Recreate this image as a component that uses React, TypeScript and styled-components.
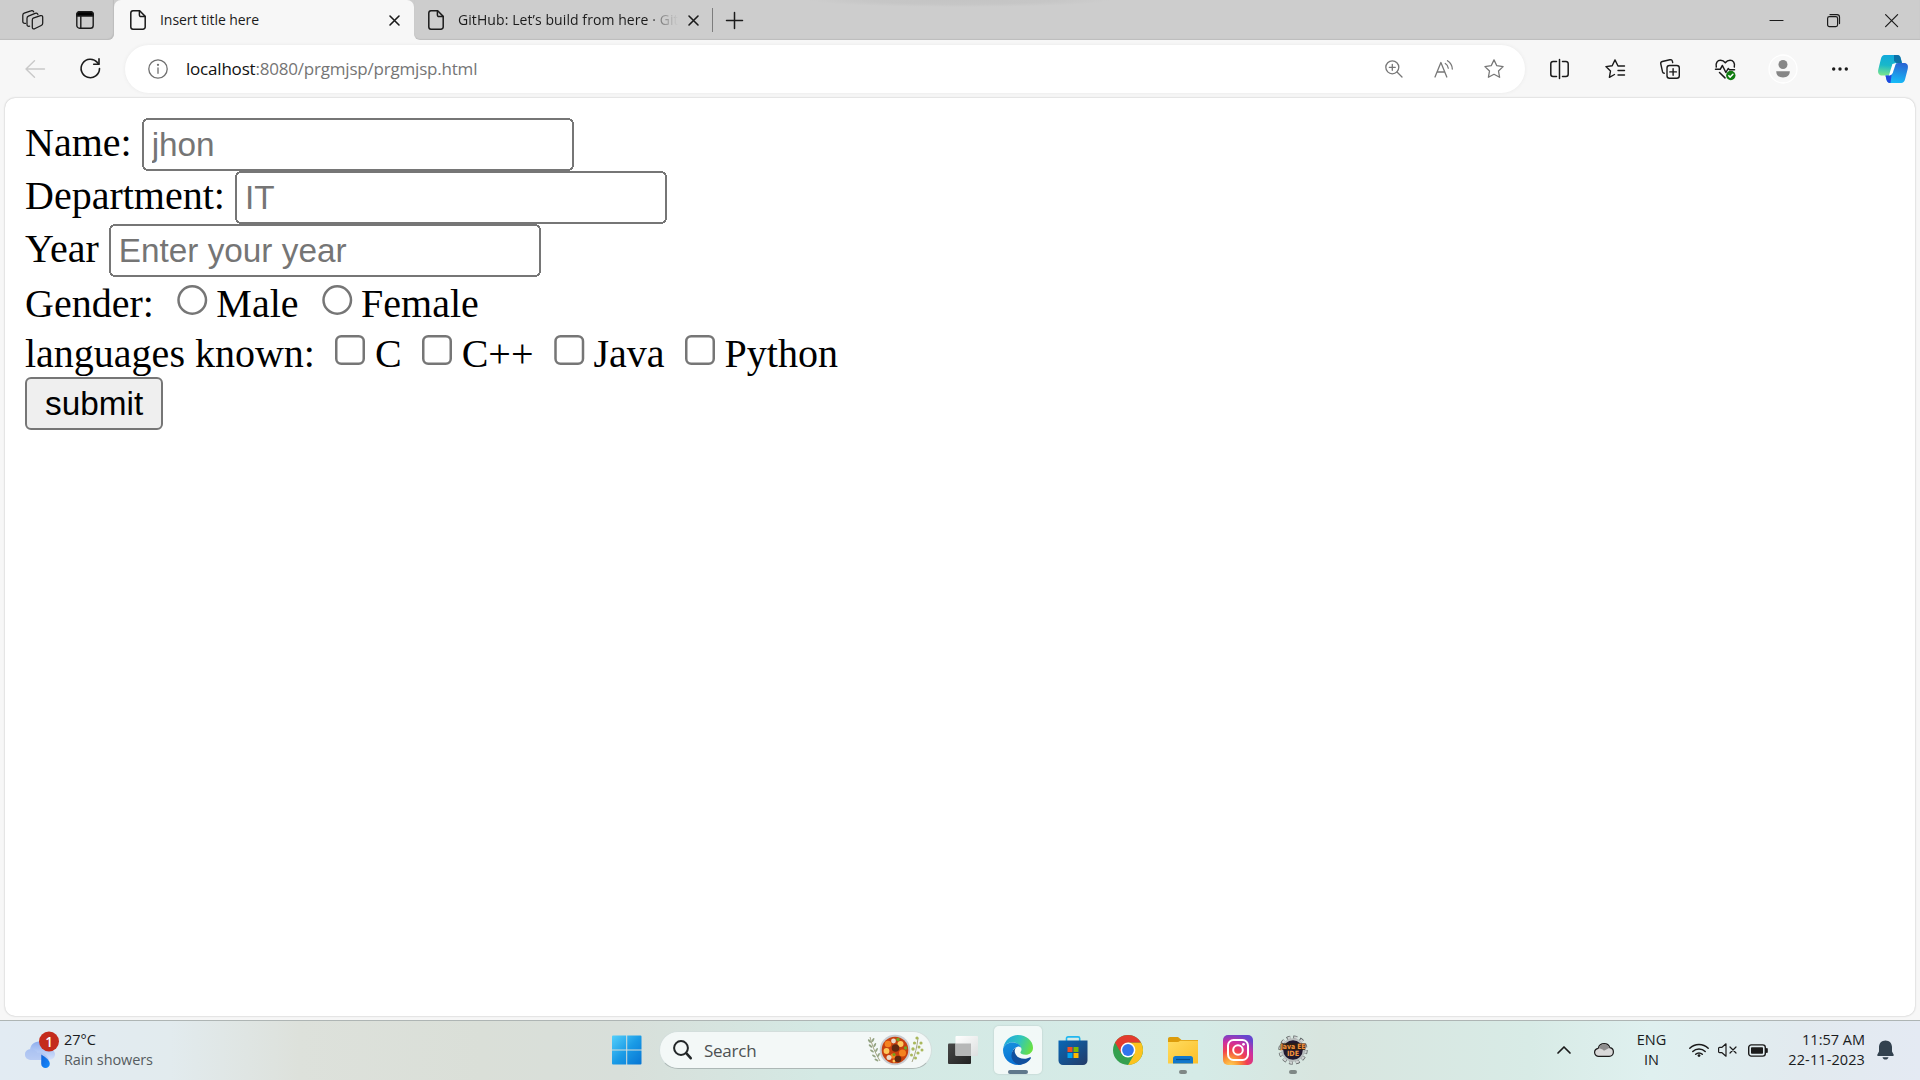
import React from "react";
import styled, { createGlobalStyle } from "styled-components";

const Global = createGlobalStyle`
  html, body { margin: 0; padding: 0; background: #f7f7f7; overflow: hidden; }
  #root { font-family: "Open Sans", "Noto Sans", sans-serif; }
`;

const Desktop = styled.div`
  width: 1920px;
  height: 1080px;
  display: flex;
  flex-direction: column;
  overflow: hidden;
`;

const Slot = styled.div<{ $w: number; $h?: number }>`
  width: ${(p) => p.$w}px;
  height: ${(p) => (p.$h ? `${p.$h}px` : "100%")};
  flex: none;
  display: flex;
  align-items: center;
  justify-content: center;
`;

const Glyph = styled.svg`
  display: block;
  flex: none;
  overflow: visible;
`;

const Spacer = styled.div`
  flex: 1;
`;

/* Tab strip */
const TabStrip = styled.header`
  height: 40px;
  display: flex;
  background: #f7f7f7;
`;

const StripStart = styled.div`
  width: 114px;
  display: flex;
  background: #cdcdcd;
  border-bottom-right-radius: 6px;
  box-sizing: border-box;
  padding-left: 5px;
  box-shadow: inset -1px -1px 1px #bdbdbd;
`;

const StripRest = styled.div`
  flex: 1;
  display: flex;
  align-items: center;
  background: radial-gradient(ellipse 150px 7px at 546px 0, #c4c4c4 0, #c6c6c6 60%, #cdcdcd 100%) #cdcdcd;
  border-bottom-left-radius: 6px;
  box-shadow: inset 0 -1px 1px #bdbdbd;
`;

const ActiveTabBack = styled.div`
  background: #cdcdcd;
  height: 40px;
`;

const ActiveTab = styled.div`
  width: 300px;
  height: 40px;
  box-sizing: border-box;
  padding: 0 14px 0 16px;
  display: flex;
  align-items: center;
  background: #f7f7f7;
  border-radius: 7px 7px 0 0;
`;

const TabTitle = styled.span<{ $w: number; $fade?: boolean; $ls: number }>`
  width: ${(p) => p.$w}px;
  margin-left: 14px;
  white-space: nowrap;
  font-size: 14px;
  line-height: 20px;
  letter-spacing: ${(p) => p.$ls}px;
  color: #1b1b1b;
  ${(p) =>
    p.$fade &&
    "mask-image: linear-gradient(to right, #000 88%, rgba(0,0,0,.5) 91%, transparent 100%);"}
`;

const BackgroundTab = styled.div`
  width: 299px;
  height: 24px;
  box-sizing: border-box;
  padding: 0 13px 0 14px;
  display: flex;
  align-items: center;
  border-right: 1px solid #7d7d7d;
`;

/* Toolbar */
const Toolbar = styled.nav`
  height: 58px;
  display: flex;
  background: #f7f7f7;
`;

const AddressBar = styled.div`
  width: 1400px;
  height: 48px;
  margin: 5px 7px 0 8px;
  box-sizing: border-box;
  padding: 0 6px 0 12px;
  display: flex;
  align-items: center;
  background: #fff;
  border-radius: 24px;
  box-shadow: 0 0 4px rgba(0, 0, 0, 0.06);
`;

const Url = styled.span`
  margin-left: 8px;
  font-size: 17px;
  line-height: 24px;
  letter-spacing: -0.2px;
  white-space: nowrap;
  color: #757575;
`;

const Host = styled.span`
  color: #111;
`;

/* Web page */
const Viewport = styled.div`
  height: 922px;
  box-sizing: border-box;
  padding: 0 5px 4px;
  background: #f7f7f7;
`;

const Page = styled.main`
  height: 918px;
  box-sizing: border-box;
  background: #fff;
  border-radius: 10px;
  box-shadow: 0 0 2px rgba(0, 0, 0, 0.28);
  overflow: hidden;
`;

const Form = styled.form`
  zoom: 2.5;
  padding: 8px;
  font-family: "Liberation Serif", "Times New Roman", serif;
  font-size: 16px;
  color: #000;
`;

const TextField = styled.input`
  width: 172.8px;
  height: 21.2px;
  box-sizing: border-box;
  font-family: "Liberation Sans", Arial, sans-serif;
  font-size: 13.333px;
`;

const Choice = styled.input``;

const Submit = styled.button`
  height: 21.2px;
  font-family: "Liberation Sans", Arial, sans-serif;
  font-size: 13.333px;
  padding: 1px 6px;
`;

/* Taskbar */
const Taskbar = styled.footer`
  height: 60px;
  box-sizing: border-box;
  border-top: 1px solid #aeb5b4;
  padding-bottom: 1px;
  display: flex;
  align-items: center;
  background: linear-gradient(
    90deg,
    #e2ebf3 0,
    #e2ebee 170px,
    #dde1db 300px,
    #dadfd8 480px,
    #d8dfda 620px,
    #d4e9e4 820px,
    #d5ebe7 1200px,
    #d8e5df 1320px,
    #d8ebe6 1530px,
    #dff0ef 1650px,
    #e2eaef 1800px,
    #e4eaf3 1920px
  );
`;

const Weather = styled.div`
  width: 587px;
  padding-left: 25px;
  display: flex;
  align-items: center;
  gap: 9px;
`;

const Lines = styled.div<{ $align?: string; $w?: number }>`
  display: flex;
  flex-direction: column;
  text-align: ${(p) => p.$align || "left"};
  width: ${(p) => (p.$w ? `${p.$w}px` : "auto")};
`;

const Line = styled.span<{ $color?: string; $ls?: number }>`
  font-size: 14.5px;
  line-height: 20px;
  white-space: nowrap;
  color: ${(p) => p.$color || "#1a1c1e"};
  letter-spacing: ${(p) => p.$ls ?? 0}px;
`;

const SearchBox = styled.div`
  width: 273px;
  height: 38px;
  margin: 0 16px 0 17px;
  box-sizing: border-box;
  padding: 0 7px 0 13px;
  display: flex;
  align-items: center;
  border: 1px solid #d3dedc;
  border-bottom-color: #adb8b6;
  border-radius: 19px;
  background: #f3f8f7;
`;

const SearchLabel = styled.span`
  margin-left: 12px;
  font-size: 17px;
  letter-spacing: -0.25px;
  color: #4d5152;
`;

const AppButton = styled.div<{ $active?: boolean }>`
  width: 48px;
  height: 48px;
  margin-right: 7px;
  box-sizing: border-box;
  padding-top: 9px;
  display: flex;
  flex-direction: column;
  align-items: center;
  justify-content: space-between;
  border-radius: 5px;
  background: ${(p) => (p.$active ? "rgba(247,251,250,.85)" : "transparent")};
  box-shadow: ${(p) => (p.$active ? "0 0 1px 1px rgba(190,208,204,.45)" : "none")};
`;

const Indicator = styled.div<{ $w: number }>`
  width: ${(p) => p.$w}px;
  height: 4px;
  border-radius: 2px;
  background: ${(p) => (p.$w > 10 ? "#60788c" : "#7f8886")};
`;

type IconProps = { w: number; h: number; children: React.ReactNode; sw?: number; color?: string };
const Icon = ({ w, h, children, sw = 1.3, color = "#1b1b1b" }: IconProps) => (
  <Glyph
    width={w}
    height={h}
    viewBox={`0 0 ${w} ${h}`}
    fill="none"
    stroke={color}
    strokeWidth={sw}
    strokeLinecap="round"
    strokeLinejoin="round"
  >
    {children}
  </Glyph>
);

const DocIcon = () => (
  <Icon w={16} h={20} sw={1.5}>
    <path d="M3 .8h6.7l5.5 5.6v10.5a2.3 2.3 0 0 1-2.3 2.3H3A2.3 2.3 0 0 1 .8 17V3A2.3 2.3 0 0 1 3 .8Z" />
    <path d="M9.4 1v4.1a1.5 1.5 0 0 0 1.5 1.5h4" />
  </Icon>
);

const TabClose = () => (
  <Icon w={11} h={11} sw={1.6}>
    <path d="m1 1 9 9M10 1l-9 9" />
  </Icon>
);

const WorkspacesIcon = () => (
  <Icon w={22} h={20} sw={1.25}>
    <path d="m11.2 8.1 7.3-2.5c1.2-.3 2.2.3 2.2 1.5v6.2c0 1-.5 1.8-1.5 2.2l-6.6 3.3c-1.300.5-2.300-.2-2.300-1.400V10c0-1 .2-1.600.9-1.900Z" />
    <path d="M7.600 16.200c-1.600.4-2.600-.2-2.600-1.700V8.300c0-1.100.3-1.700 1.400-2.200l6.700-2.700c1.500-.5 2.600 0 2.800 1.100" />
    <path d="M3.500 13.300C1.900 13.500.8 12.900.8 11.500V5.300c0-1.100.4-1.800 1.400-2.200L8.900.900c1.400-.5 2.500-.1 2.800 1" />
  </Icon>
);

const TabActionsIcon = () => (
  <Icon w={18} h={18} sw={1.4}>
    <rect x="0.800" y="0.800" width="16.400" height="16.400" rx="2.800" />
    <path d="M.8 5V3.400A2.600 2.600 0 0 1 3.400.8h11.200a2.600 2.600 0 0 1 2.600 2.600V5Z" fill="#000" />
    <path d="M4.800 5v12" />
  </Icon>
);

const RefreshIcon = () => (
  <Icon w={21} h={21} sw={1.6}>
    <path d="M19.500 10.500a9.200 9.200 0 1 1-2.100-5.900l1.300 1.600" />
    <path d="M19 .9v5.300h-5.300" />
  </Icon>
);

const STAR = "m10 .9 2.800 5.800 6.300.9-4.600 4.400 1.100 6.300L10 15.300l-5.600 3 1.100-6.300L.9 7.600l6.300-.9Z";

const CopilotLogo = () => (
  <Glyph width="30" height="28" viewBox="0 0 30 28">
    <defs>
      <linearGradient id="cpA" x1=".4" y1="0" x2=".3" y2="1">
        <stop offset="0" stopColor="#11a9dc" />
        <stop offset=".5" stopColor="#19b8c9" />
        <stop offset="1" stopColor="#7be58c" />
      </linearGradient>
      <linearGradient id="cpB" x1=".6" y1="0" x2=".4" y2="1">
        <stop offset="0" stopColor="#2a66d4" />
        <stop offset="1" stopColor="#16bdf8" />
      </linearGradient>
    </defs>
    <path d="M6.500 0h13c2 0 2.800 1.500 3.300 3.400L24 8h-4.500c-2 0-3 1-3.600 3l-2 6.500c-.7 2-1.600 3-3.700 3H4C1 20.500-.5 18 .3 14.500L3 3.500C3.600 1.300 4.800 0 6.500 0Z" fill="url(#cpA)" />
    <path d="M16 0h3.500c2 0 2.800 1.500 3.300 3.400L24 8h-5.500L16 6Z" fill="#0b5d98" opacity=".75" />
    <path d="M24 8h2c3.500 0 4.500 2.500 3.700 6L27 24.500c-.6 2.200-1.800 3.500-3.800 3.500H12c-2 0-3-1.300-3.500-3.200L7.500 20.500h3c2 0 3-1 3.600-3L16.400 11c.7-2 1.600-3 3.600-3Z" fill="url(#cpB)" />
    <path d="M7.500 20.500h3c1.600 0 2.500-.6 3.200-1.800L12.500 28H12c-2 0-3-1.300-3.500-3.200Z" fill="#2146dd" />
    <path d="m14.400 9-3.500 11.500c2 0 3.300-1 4-3L18 8Z" fill="#fff" />
  </Glyph>
);

const EdgeLogo = () => (
  <Glyph width="30" height="30" viewBox="0 0 30 30">
    <defs>
      <linearGradient id="edA" x1="0" y1=".3" x2="1" y2=".6">
        <stop offset="0" stopColor="#1fa7dd" />
        <stop offset=".5" stopColor="#30c5bd" />
        <stop offset="1" stopColor="#69e23f" />
      </linearGradient>
      <linearGradient id="edB" x1=".2" y1="0" x2=".5" y2="1">
        <stop offset="0" stopColor="#1690dd" />
        <stop offset="1" stopColor="#0870d3" />
      </linearGradient>
    </defs>
    <path d="M.4 12.500C1.800 5 7.700 0 15 0c8.300 0 15 5.700 15 12.800 0 4.300-3.300 7-7.300 7-3.500 0-5.300-1.200-5.300-2.300 0-.8 1.100-1.300 1.100-3.300C18.500 10 13.800 7.600 9 7.600c-3.600 0-6.600 1.600-8.600 4.900Z" fill="url(#edA)" />
    <path d="M.2 13.200C1.500 9.600 5 7.400 9 7.400c5.500 0 9.500 3 9.500 6.700 0-2-2.200-3-4-2.400-4.200 1.500-6.200 5-4.800 9.200 1.300 4.300 5 7.200 9.300 8.500-1.300.4-2.600.6-4 .6C6.700 30 0 23.500 0 15Z" fill="url(#edB)" />
    <path d="M14.200 11.800c-2 1.200-2.900 3.200-2.300 5.700 1 4 4.800 6.300 9.300 6.300 2.300 0 4.300-.6 5.800-1.500.7-.4 1.300.2.9.9-2.300 4-7.100 6.800-12.400 6.200-4.500-1.200-7.400-5-7-9.400.3-3.700 2.500-6.600 5.700-8.200Z" fill="#10509e" />
  </Glyph>
);

const StoreLogo = () => (
  <Glyph width="30" height="30" viewBox="0 0 30 30">
    <defs>
      <linearGradient id="stA" x1="0" y1="0" x2="1" y2="1">
        <stop offset="0" stopColor="#0867b6" />
        <stop offset="1" stopColor="#243b67" />
      </linearGradient>
    </defs>
    <path d="M8.500 6V3.500c0-1 .6-1.600 1.600-1.600h10c1 0 1.600.6 1.600 1.600V6" fill="none" stroke="#22b7ef" strokeWidth="1.600" />
    <path d="M.5 5.500h29v20a4.500 4.500 0 0 1-4.500 4.500H5a4.500 4.500 0 0 1-4.500-4.500Z" fill="url(#stA)" />
    <path d="M9.500 12h5v5h-5z" fill="#f25022" />
    <path d="M15.500 12h5v5h-5z" fill="#7fba00" />
    <path d="M9.500 18h5v5h-5z" fill="#00a4ef" />
    <path d="M15.500 18h5v5h-5z" fill="#ffb900" />
  </Glyph>
);

const ChromeLogo = () => (
  <Glyph width="30" height="30" viewBox="0 0 30 30">
    <circle cx="15" cy="15" r="15" fill="#34a04f" />
    <path d="M15 15V7.500h13A15 15 0 0 1 15.100 30l6.400-11.200Z" fill="#fcc31e" />
    <path d="M2 7.500A15 15 0 0 1 28 7.500H15L8.500 18.700Z" fill="#e33b2e" />
    <circle cx="15" cy="15" r="7.400" fill="#fff" />
    <circle cx="15" cy="15" r="5.900" fill="#3174ec" />
  </Glyph>
);

const ExplorerLogo = () => (
  <Glyph width="30" height="30" viewBox="0 0 30 30">
    <defs>
      <linearGradient id="exA" x1="0" y1="0" x2="1" y2="1">
        <stop offset="0" stopColor="#ffdc60" />
        <stop offset="1" stopColor="#fcbf28" />
      </linearGradient>
    </defs>
    <path d="M0 4c0-1.200.8-2 2-2h7c1 0 1.500.3 2.200 1L13.500 5H30v6H0Z" fill="#dc9c0b" />
    <path d="M0 7h9.500c1 0 1.700-.3 2.300-.9l.6-.4H30v22.800H0Z" fill="url(#exA)" />
    <path d="M5 28.500v-5c0-1.500 1-2.500 2.500-2.500h15c1.500 0 2.500 1 2.500 2.500v5Z" fill="#1278cb" />
    <path d="M8 24.500h14" stroke="#074f8d" strokeWidth="1.200" />
  </Glyph>
);

const InstagramLogo = () => (
  <Glyph width="30" height="30" viewBox="0 0 30 30">
    <defs>
      <radialGradient id="igA" cx=".25" cy="1.050" r="1.100">
        <stop offset="0" stopColor="#ffd35a" />
        <stop offset=".25" stopColor="#fb9a35" />
        <stop offset=".5" stopColor="#f2404f" />
        <stop offset=".75" stopColor="#cd2fa0" />
        <stop offset="1" stopColor="#6746cf" />
      </radialGradient>
    </defs>
    <rect width="30" height="30" rx="5" fill="url(#igA)" />
    <g fill="none" stroke="#fff" strokeWidth="2">
      <rect x="5" y="5" width="20" height="20" rx="5.500" />
      <circle cx="15" cy="15" r="4.800" />
    </g>
    <circle cx="20.500" cy="9.300" r="1.400" fill="#fff" />
  </Glyph>
);

const GearText = styled.text`
  font: bold 7.2px "DejaVu Sans Condensed", "DejaVu Sans", sans-serif;
  fill: #f5923a;
`;

const JavaLogo = () => (
  <Glyph width="30" height="30" viewBox="0 0 30 30">
    <circle cx="15" cy="15" r="12.800" fill="none" stroke="#555b5b" strokeWidth="3.600" strokeDasharray="3.700 3" />
    <circle cx="15" cy="15" r="12.700" fill="none" stroke="#cfd3d3" strokeWidth="2.400" strokeDasharray="3.100 3.600" strokeDashoffset="-.3" />
    <circle cx="15" cy="15" r="10.800" fill="#21182f" stroke="#b9bebe" strokeWidth="2" />
    <rect x="2.500" y="8.300" width="25" height="6.800" rx="1" fill="#32200f" opacity=".85" />
    <GearText x="15" y="14.300" textAnchor="middle" textLength="25" lengthAdjust="spacingAndGlyphs">Java EE</GearText>
    <GearText x="15" y="20.700" textAnchor="middle">IDE</GearText>
  </Glyph>
);

const TaskViewLogo = () => (
  <Glyph width="30" height="30" viewBox="0 0 30 30">
    <defs>
      <linearGradient id="tvA" x1="0" y1="0" x2="1" y2="1">
        <stop offset="0" stopColor="#484848" />
        <stop offset="1" stopColor="#222" />
      </linearGradient>
      <linearGradient id="tvB" x1="0" y1="0" x2="1" y2="1">
        <stop offset="0" stopColor="#fff" />
        <stop offset="1" stopColor="#dcdfdf" />
      </linearGradient>
    </defs>
    <rect x="0" y="8.500" width="23" height="20.500" rx="1" fill="url(#tvA)" />
    <rect x="7.500" y="1" width="22.500" height="20" rx="1" fill="url(#tvB)" />
    <path d="M7.500 8.500H23V21H8.500a1 1 0 0 1-1-1Z" fill="#b6b7b7" />
  </Glyph>
);

const StartLogo = () => (
  <Glyph width="30" height="30" viewBox="0 0 30 30">
    <defs>
      <linearGradient id="wnA" x1="0" y1="0" x2="30" y2="30" gradientUnits="userSpaceOnUse">
        <stop offset="0" stopColor="#55d0fb" />
        <stop offset=".5" stopColor="#1a9be6" />
        <stop offset="1" stopColor="#0673d2" />
      </linearGradient>
    </defs>
    <path d="M1 .5h13.200v14H0V1.500a1 1 0 0 1 1-1ZM15.200.5H28.500a1 1 0 0 1 1 1v13H15.200ZM0 15.500h14.200v14H1a1 1 0 0 1-1-1ZM15.200 15.500h14.300v13a1 1 0 0 1-1 1H15.200Z" fill="url(#wnA)" />
  </Glyph>
);

const BadgeText = styled.text`
  font: 600 13.5px "Open Sans", sans-serif;
  fill: #fff;
`;

const WeatherIcon = () => (
  <Glyph width="30" height="38" viewBox="0 0 30 38">
    <defs>
      <linearGradient id="weA" x1="0" y1="0" x2="0" y2="1">
        <stop offset="0" stopColor="#8eaeee" />
        <stop offset="1" stopColor="#d5e2fb" />
      </linearGradient>
      <linearGradient id="weB" x1="0" y1="0" x2="1" y2="1">
        <stop offset="0" stopColor="#1262d8" />
        <stop offset="1" stopColor="#148cff" />
      </linearGradient>
    </defs>
    <path d="M5 20C5 14 9 10.500 14 10.500s9 3 10 7.500c3.500.2 6 2.200 6 5.300S27.500 29 24 29H6.500C2.500 29 0 26.500 0 23.500S2 18.400 5 18.200Z" fill="url(#weA)" />
    <path d="M0 23.500c0-3 2.500-5 6-5 3 0 5.500 1.500 6.500 3.500 1.500-1 8-1.500 11.500 7H6.500C2.500 29 0 26.500 0 23.500Z" fill="#a9c0ef" opacity=".65" />
    <path d="M16.300 23.500c5 3 8.500 6 8.500 9.200a4.300 4.300 0 0 1-8.600 0Z" fill="url(#weB)" />
    <circle cx="24" cy="10.500" r="10" fill="#c42b1c" />
    <BadgeText x="24.200" y="15.500" textAnchor="middle">1</BadgeText>
  </Glyph>
);

const leaf = (x: number, y: number, r: number) => (
  <ellipse key={`${x}-${y}`} cx={x} cy={y} rx="2.200" ry="1" transform={`rotate(${r} ${x} ${y})`} />
);

const FoodIcon = () => (
  <Glyph width="56" height="32" viewBox="0 0 56 32">
    <path d="M2 3c2 8 5 16 10 24M44 28c3-7 5-15 6-24" stroke="#9d9c77" strokeWidth=".9" fill="none" />
    <g fill="#93a383">
      {leaf(1.5, 7, 50)}{leaf(5, 6, -60)}{leaf(2.5, 12, 40)}{leaf(6.8, 11, -60)}
      {leaf(4, 17, 35)}{leaf(8.5, 16, -60)}{leaf(6, 22, 35)}{leaf(10.5, 21, -60)}{leaf(8.5, 26, 30)}
    </g>
    <g fill="#a9b85c">
      <circle cx="49" cy="4" r="1.600" /><circle cx="53" cy="9" r="1.600" /><circle cx="46.500" cy="9" r="1.600" />
      <circle cx="51" cy="13" r="1.500" /><circle cx="45" cy="15" r="1.700" /><circle cx="54" cy="16" r="1.500" />
      <circle cx="50" cy="19" r="1.600" /><circle cx="43.500" cy="21" r="1.500" /><circle cx="47.500" cy="24" r="1.500" />
    </g>
    <circle cx="27" cy="16" r="15.300" fill="#c9cbd1" />
    <circle cx="27" cy="16" r="13.300" fill="#c8410f" />
    <g fill="#f58220"><circle cx="20" cy="10" r="3.300" /><circle cx="34.500" cy="19" r="3.500" /><circle cx="25" cy="22" r="2.600" /></g>
    <g fill="#ffc85b"><circle cx="32.500" cy="10" r="3" /><circle cx="18.500" cy="17" r="2.900" /><circle cx="26" cy="27" r="1.500" /></g>
    <g fill="#60280f"><circle cx="27.500" cy="14" r="3.800" /><circle cx="30" cy="25" r="3.300" /></g>
    <g fill="#eadbc9"><circle cx="25.500" cy="7" r="2.400" /><circle cx="21" cy="23.500" r="2.500" /></g>
    <g fill="#74a51d"><circle cx="30" cy="5.500" r="1.700" /><circle cx="37.500" cy="14" r="1.700" /><circle cx="26" cy="20.500" r="1.500" /></g>
  </Glyph>
);

const TrayEnd = styled.div`
  padding-right: 15px;
`;

const apps = [
  { id: "edge", logo: <EdgeLogo />, active: true, mark: 20 },
  { id: "store", logo: <StoreLogo />, mark: 0 },
  { id: "chrome", logo: <ChromeLogo />, mark: 0 },
  { id: "explorer", logo: <ExplorerLogo />, mark: 8 },
  { id: "instagram", logo: <InstagramLogo />, mark: 0 },
  { id: "java", logo: <JavaLogo />, mark: 8 },
];

export default function App() {
  return (
    <Desktop>
      <Global />
      <TabStrip>
        <StripStart>
          <Slot $w={55}><WorkspacesIcon /></Slot>
          <Slot $w={50}><TabActionsIcon /></Slot>
        </StripStart>
        <ActiveTabBack>
          <ActiveTab>
            <DocIcon />
            <TabTitle $w={229} $ls={-0.05}>Insert title here</TabTitle>
            <TabClose />
          </ActiveTab>
        </ActiveTabBack>
        <StripRest>
          <BackgroundTab>
            <DocIcon />
            <TabTitle $w={220} $fade $ls={0.08}>GitHub: Let’s build from here · Git</TabTitle>
            <Spacer />
            <TabClose />
          </BackgroundTab>
          <Slot $w={43}>
            <Icon w={17} h={17} sw={1.5}><path d="M8.500.5v16M.5 8.500h16" /></Icon>
          </Slot>
          <Spacer />
          <Slot $w={57}><Icon w={13} h={13} sw={1.2}><path d="M0 6.500h13" /></Icon></Slot>
          <Slot $w={57}>
            <Icon w={13} h={13} sw={1.2}>
              <rect x=".6" y="2.600" width="10" height="10" rx="1.800" />
              <path d="M3 .6h7a2.500 2.500 0 0 1 2.500 2.500v6.500" />
            </Icon>
          </Slot>
          <Slot $w={58}><Icon w={13} h={13} sw={1.2}><path d="m.6.6 12 12M12.600.6l-12 12" /></Icon></Slot>
        </StripRest>
      </TabStrip>

      <Toolbar>
        <Slot $w={70} $h={57}>
          <Icon w={20} h={18} sw={1.4} color="#c9c9c9"><path d="M19.500 9H1M9.500.7 1 9l8.500 8.300" /></Icon>
        </Slot>
        <Slot $w={40} $h={57}><RefreshIcon /></Slot>
        <Slot $w={7}> </Slot>
        <AddressBar>
          <Slot $w={41}>
            <Icon w={20} h={20} color="#6f6f6f">
              <circle cx="10" cy="10" r="9.200" />
              <path d="M10 9v5.300" />
              <circle cx="10" cy="5.800" r=".5" fill="#6f6f6f" />
            </Icon>
          </Slot>
          <Url><Host>localhost</Host>:8080/prgmjsp/prgmjsp.html</Url>
          <Spacer />
          <Slot $w={50}>
            <Icon w={18} h={18} color="#777">
              <circle cx="7.300" cy="7.300" r="6.500" />
              <path d="m12 12 5 5M7.300 4.300v6M4.300 7.300h6" />
            </Icon>
          </Slot>
          <Slot $w={50}>
            <Icon w={20} h={18} color="#777">
              <path d="M1 17 6.900 2.500 12.800 17M3 12h7.800M11.300 3.500c1.900 1.200 2.800 2.700 3 4.700M13.500.7c3 2 4.800 4.900 4.800 8.300" />
            </Icon>
          </Slot>
          <Slot $w={50}><Icon w={20} h={20} color="#777"><path d={STAR} /></Icon></Slot>
        </AddressBar>
        <Slot $w={55}>
          <Icon w={19} h={20} sw={1.5}>
            <path d="M9.500.5v19M6.500 2.500H3A2.200 2.200 0 0 0 .8 4.700v10.600A2.200 2.200 0 0 0 3 17.500h3.500M12.500 2.500H16a2.200 2.200 0 0 1 2.200 2.200v10.600a2.200 2.200 0 0 1-2.200 2.200h-3.500" />
          </Icon>
        </Slot>
        <Slot $w={55}>
          <Icon w={20} h={20} sw={1.4}>
            <path d="M18.500 7h-5.500L10 .9 7.200 6.700l-6.300.9 4.600 4.400-1.100 6.300 5.100-2.800M13 7h6.500M13 11.500h6.500M13 16h6.500" />
          </Icon>
        </Slot>
        <Slot $w={55}>
          <Icon w={20} h={20} sw={1.4}>
            <rect x="7" y="6.500" width="12.300" height="12.800" rx="2.500" />
            <path d="M13.100 9.600v6.600M9.800 12.900h6.600M4.300 14.200c-1 0-1.500-.5-1.800-1.500L.8 5c-.3-1.200.3-2.200 1.500-2.500L9.800.8c1.300-.3 2.300.2 2.600 1.500l.3 1.200" />
          </Icon>
        </Slot>
        <Slot $w={56}>
          <Icon w={21} h={21} sw={1.5}>
            <path d="M1.300 8C.3 3.800 2.500 1.300 5.500 1.300c2 0 3.500.8 4.800 2.500 1.300-1.700 2.800-2.500 4.800-2.500 3 0 5.200 2.500 4.200 6.700M.5 10.300h4.700l2.200-3.800 3.500 7 2.300-4 1.300 1.200h5M4.500 13.500l5.500 5.400" />
            <circle cx="15.800" cy="16.500" r="4.700" fill="#107c10" stroke="none" />
            <path d="m13.800 16.700 1.400 1.400 2.700-2.900" stroke="#fff" />
          </Icon>
        </Slot>
        <Slot $w={60}>
          <Icon w={30} h={30}>
            <circle cx="15" cy="15" r="14" fill="#f8f8f8" stroke="#fff" />
            <g fill="#868686" stroke="none">
              <circle cx="15" cy="10.500" r="4.500" />
              <path d="M8.200 17.200h13.600c0 4-2.500 6.200-6.800 6.200s-6.800-2.200-6.800-6.200Z" />
            </g>
          </Icon>
        </Slot>
        <Slot $w={53}>
          <Icon w={16} h={4}>
            <g fill="#1b1b1b" stroke="none"><circle cx="1.700" cy="2" r="1.700" /><circle cx="8" cy="2" r="1.700" /><circle cx="14.300" cy="2" r="1.700" /></g>
          </Icon>
        </Slot>
        <Slot $w={53}><CopilotLogo /></Slot>
      </Toolbar>

      <Viewport>
        <Page>
          <Form onSubmit={(e) => e.preventDefault()}>
            Name: <TextField type="text" placeholder="jhon" /><br />
            Department: <TextField type="text" placeholder="IT" /><br />
            Year <TextField type="text" placeholder="Enter your year" /><br />
            Gender: <Choice type="radio" name="gender" />Male <Choice type="radio" name="gender" />Female<br />
            languages known: <Choice type="checkbox" />C <Choice type="checkbox" />C++ <Choice type="checkbox" />Java <Choice type="checkbox" />Python<br />
            <Submit type="submit">submit</Submit>
          </Form>
        </Page>
      </Viewport>

      <Taskbar>
        <Weather>
          <WeatherIcon />
          <Lines>
            <Line>27°C</Line>
            <Line $color="#565c60" $ls={-0.1}>Rain showers</Line>
          </Lines>
        </Weather>
        <StartLogo />
        <SearchBox>
          <Icon w={19} h={20} sw={2} color="#222627">
            <circle cx="8" cy="8" r="6.900" />
            <path d="m13.200 13.200 4.500 5" strokeWidth="2.600" />
          </Icon>
          <SearchLabel>Search</SearchLabel>
          <Spacer />
          <FoodIcon />
        </SearchBox>
        <TaskViewLogo />
        <Slot $w={16}> </Slot>
        {apps.map((a) => (
          <AppButton key={a.id} $active={a.active}>
            {a.logo}
            {a.mark > 0 && <Indicator $w={a.mark} />}
          </AppButton>
        ))}
        <Spacer />
        <Slot $w={41}>
          <Icon w={14} h={8} sw={1.7}><path d="m1 7 6-6 6 6" /></Icon>
        </Slot>
        <Slot $w={39}>
          <Icon w={20} h={14} sw={1.2}>
            <path d="M5 13.300a4 4 0 0 1-.8-8C5 2.500 7.300.7 10.200.7c2.700 0 4.800 1.500 5.700 4 2 .4 3.500 2 3.500 4.300 0 2.600-1.800 4.300-4.200 4.300Z" fill="#d9d9d9" />
            <path d="M4.500 5.500c2 0 3.500.3 5.500 2.300l5.500-3C14.500 2.300 12.500.9 10.200.9 7.500.9 5.300 2.700 4.500 5.500Z" fill="#8e8e8e" stroke="none" />
          </Icon>
        </Slot>
        <Lines $w={57} $align="center">
          <Line>ENG</Line>
          <Line>IN</Line>
        </Lines>
        <Slot $w={38}>
          <Icon w={20} h={14} sw={1.5}>
            <path d="M.8 5.300c5-5.200 13.400-5.200 18.400 0M3.800 8.500c3.400-3.500 9-3.500 12.400 0M6.700 11.300c1.800-1.800 4.800-1.800 6.600 0" />
            <circle cx="10" cy="12.600" r="1.400" fill="#1b1b1b" stroke="none" />
          </Icon>
        </Slot>
        <Icon w={19} h={14} sw={1.2}>
          <path d="M8 .8v12.400L4 9.700H1.600a1 1 0 0 1-1-1V5.300a1 1 0 0 1 1-1H4ZM12 4l6 6M18 4l-6 6" />
        </Icon>
        <Slot $w={42}>
          <Icon w={20} h={13} sw={1.4}>
            <rect x=".7" y=".9" width="16.600" height="11.200" rx="2.600" />
            <rect x="3" y="3.200" width="12" height="6.600" rx=".8" fill="#1b1b1b" stroke="none" />
            <path d="M18.800 5v3" strokeWidth="2" />
          </Icon>
        </Slot>
        <Lines $w={86} $align="right">
          <Line>11:57 AM</Line>
          <Line $ls={0.1}>22-11-2023</Line>
        </Lines>
        <TrayEnd>
          <Slot $w={40}>
            <Glyph width="17" height="20" viewBox="0 0 17 20">
              <path d="M8.500.5c3.800 0 6.500 2.800 6.500 6.500v4.500l1.600 3c.4.900 0 1.500-.9 1.500H1.300c-.9 0-1.300-.6-.9-1.500l1.600-3V7C2 3.300 4.700.5 8.500.5ZM5.500 17.200h6c-.4 1.400-1.500 2.300-3 2.300s-2.600-.9-3-2.300Z" fill="#33424f" />
            </Glyph>
          </Slot>
        </TrayEnd>
      </Taskbar>
    </Desktop>
  );
}
